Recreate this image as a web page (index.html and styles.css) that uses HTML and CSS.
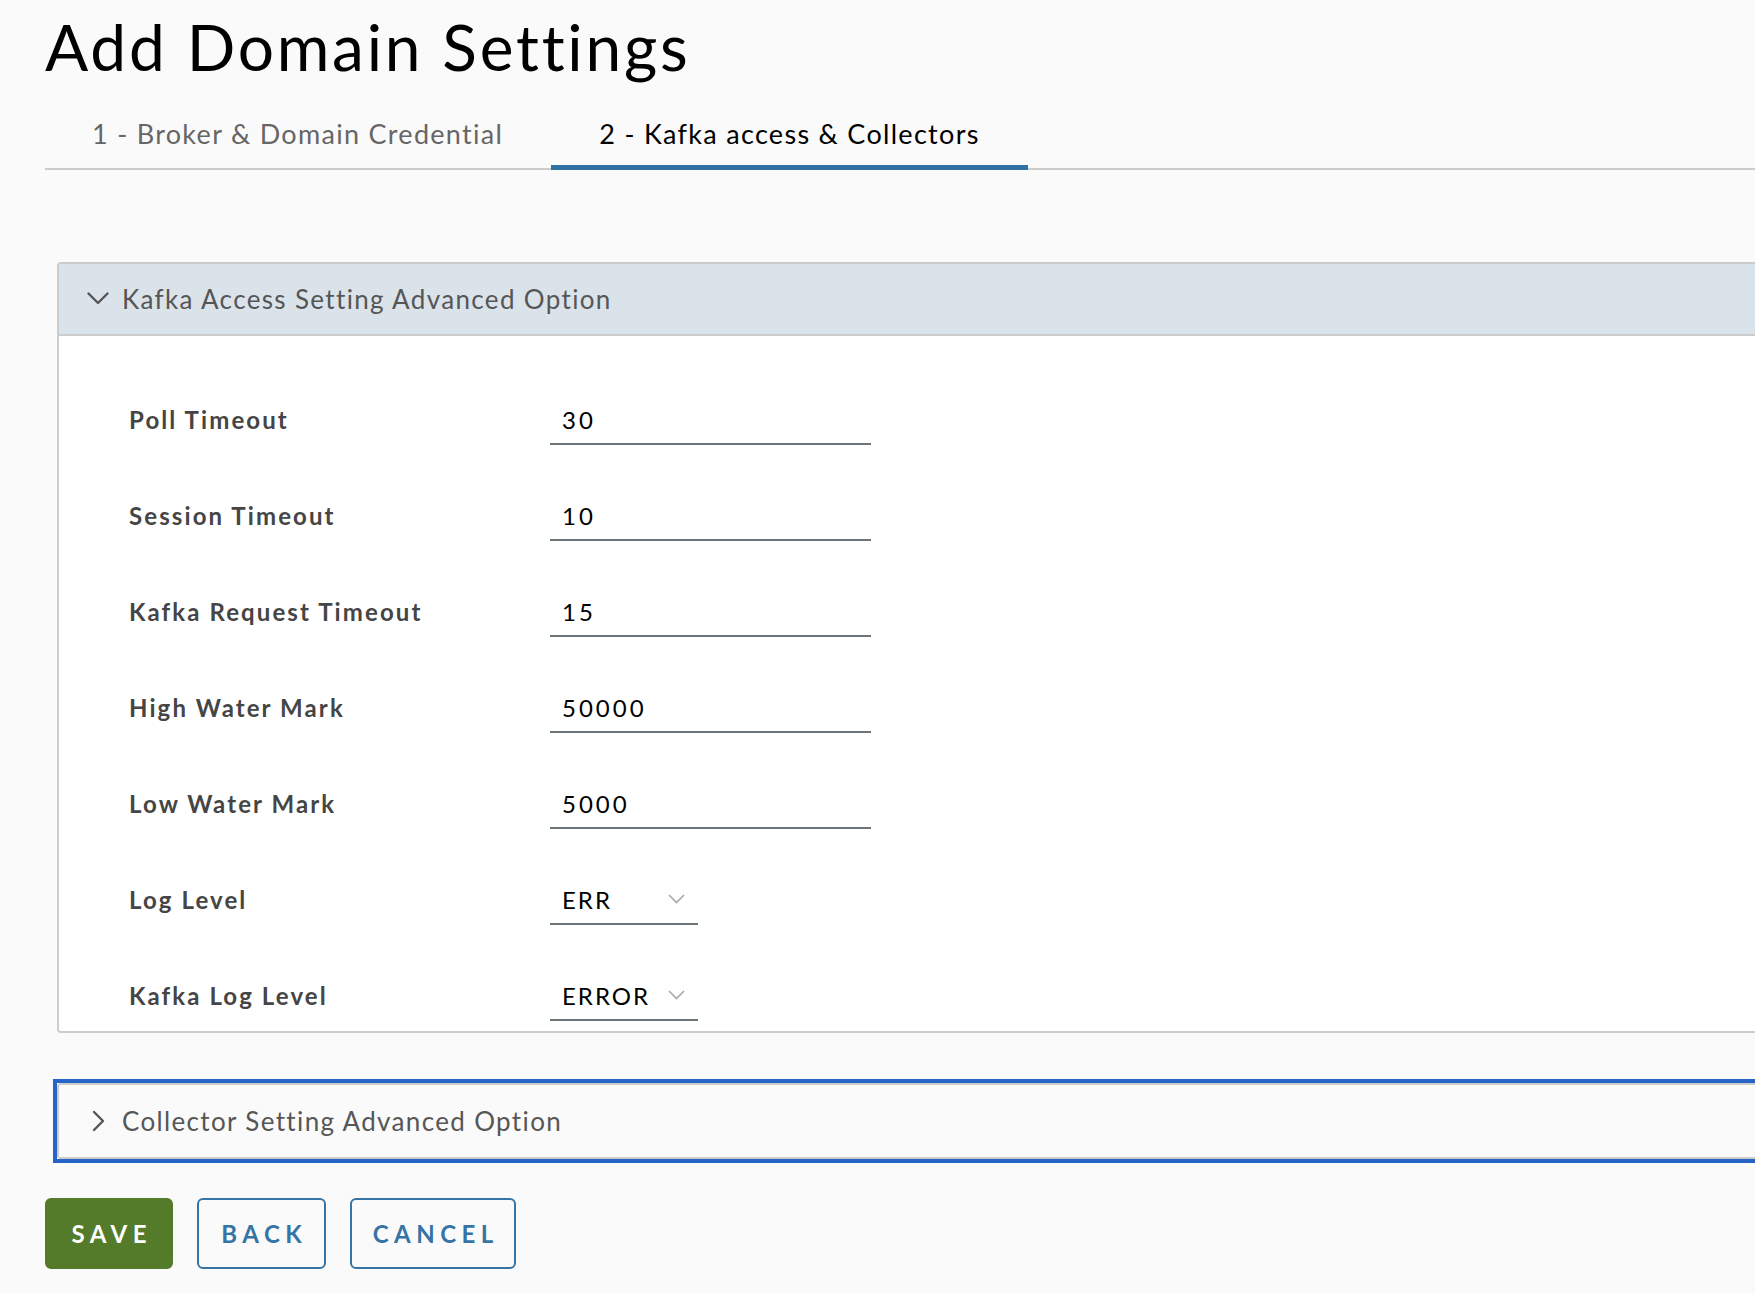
FILE: index.html
```html
<!DOCTYPE html>
<html lang="en">
<head>
<meta charset="utf-8">
<title>Add Domain Settings</title>
<link rel="stylesheet" href="styles.css">
</head>
<body>
<div class="page">
  <h1 class="title">Add Domain Settings</h1>
  <nav class="tabs">
    <div class="tab">1 - Broker &amp; Domain Credential</div>
    <div class="tab active">2 - Kafka access &amp; Collectors</div>
  </nav>

  <section class="panel">
    <div class="panel-head">
      <svg class="chev-down" width="22" height="13" viewBox="0 0 22 13"><path d="M1.5 1.5 L11 11 L20.5 1.5" fill="none" stroke="#555" stroke-width="2.4" stroke-linecap="round" stroke-linejoin="round"/></svg>
      <span>Kafka Access Setting Advanced Option</span>
    </div>
    <div class="panel-body">
      <div class="form">
        <label class="lbl">Poll Timeout</label>
        <input class="field" type="text" value="30">
        <label class="lbl">Session Timeout</label>
        <input class="field" type="text" value="10">
        <label class="lbl">Kafka Request Timeout</label>
        <input class="field" type="text" value="15">
        <label class="lbl">High Water Mark</label>
        <input class="field" type="text" value="50000">
        <label class="lbl">Low Water Mark</label>
        <input class="field" type="text" value="5000">
        <label class="lbl">Log Level</label>
        <div class="select"><span>ERR</span><svg class="sel-chev" width="17" height="10" viewBox="0 0 17 10"><path d="M1 1 L8.5 8.5 L16 1" fill="none" stroke="#a9a9a9" stroke-width="1.6"/></svg></div>
        <label class="lbl">Kafka Log Level</label>
        <div class="select"><span>ERROR</span><svg class="sel-chev" width="17" height="10" viewBox="0 0 17 10"><path d="M1 1 L8.5 8.5 L16 1" fill="none" stroke="#a9a9a9" stroke-width="1.6"/></svg></div>
      </div>
    </div>
  </section>

  <div class="focus-ring">
    <section class="panel closed">
      <div class="panel-head">
        <svg class="chev-right" width="13" height="22" viewBox="0 0 13 22"><path d="M2 2 L11 11 L2 20" fill="none" stroke="#555" stroke-width="2.4" stroke-linecap="round" stroke-linejoin="round"/></svg>
        <span>Collector Setting Advanced Option</span>
      </div>
    </section>
  </div>

  <div class="actions">
    <button class="btn btn-primary btn-save">SAVE</button>
    <button class="btn btn-outline btn-back">BACK</button>
    <button class="btn btn-outline btn-cancel">CANCEL</button>
  </div>
</div>
</body>
</html>
```

FILE: styles.css
```css
html, body {
  margin: 0;
  padding: 0;
  background: #fafafa;
  overflow: hidden;
  font-family: "Lato", "Open Sans", sans-serif;
}

.page {
  padding-left: 45px;
}

.title {
  margin: 9px 0 0 0;
  font-size: 64px;
  line-height: 1.2;
  font-weight: 400;
  color: #000;
  letter-spacing: 2.75px;
}

.tabs {
  margin-top: 14px;
  display: flex;
  align-items: flex-end;
  border-bottom: 2px solid #cccccc;
}

.tab {
  padding: 17px 48px 17px 47px;
  font-size: 27px;
  line-height: 34px;
  color: #666;
  letter-spacing: 1.3px;
  white-space: nowrap;
}

.tab.active {
  color: #000;
  padding: 17px 48px 14px 48px;
  border-bottom: 5px solid #3172a2;
  margin-bottom: -2px;
}

.panel {
  margin: 92px -40px 0 12px;
  border: 2px solid #cccccc;
  border-radius: 4px;
  background: #fff;
}

.panel-head {
  height: 70px;
  background: #dbe3ea;
  border-bottom: 2px solid #cccccc;
  border-radius: 2px 2px 0 0;
  display: flex;
  align-items: center;
  padding-left: 28px;
  gap: 13px;
  font-size: 26px;
  color: #565656;
  letter-spacing: 1.35px;
}

.panel-body {
  padding: 61px 0 10px 70px;
}

.form {
  display: grid;
  grid-template-columns: 421px auto;
  row-gap: 48px;
  align-items: start;
}

.lbl {
  font-weight: 700;
  font-size: 24px;
  line-height: 46px;
  color: #454545;
  letter-spacing: 2.1px;
}

.field {
  display: block;
  box-sizing: border-box;
  width: 321px;
  height: 48px;
  border: none;
  border-bottom: 2px solid #6b7479;
  background: transparent;
  padding: 0 12px;
  margin: 0;
  font-family: "Lato", "Open Sans", sans-serif;
  font-size: 24px;
  color: #000;
  outline: none;
  letter-spacing: 3px;
}

.select {
  box-sizing: border-box;
  width: 148px;
  height: 48px;
  border-bottom: 2px solid #6b7479;
  display: flex;
  align-items: center;
  padding-left: 12px;
  font-size: 24px;
  color: #000;
  letter-spacing: 2px;
}

.select span {
  flex: 1;
}

.sel-chev {
  margin-right: 13px;
  margin-top: -2px;
}

.focus-ring {
  margin: 46px -40px 0 8px;
  border: 4px solid #2864c7;
}

.focus-ring .panel {
  margin: 0;
  background: #fafafa;
}

.panel.closed .panel-head {
  height: 72px;
  background: #fafafa;
  border-bottom: none;
  padding-left: 33px;
  gap: 17px;
}

.actions {
  margin-top: 35px;
  display: flex;
  gap: 24px;
}

.btn {
  box-sizing: border-box;
  height: 71px;
  border-radius: 6px;
  font-family: "Lato", "Open Sans", sans-serif;
  font-weight: 700;
  font-size: 24px;
  letter-spacing: 5.5px;
  padding: 0 0 0 5.5px;
  text-align: center;
  cursor: pointer;
}

.btn-save { width: 128px; }
.btn-back { width: 129px; }
.btn-cancel { width: 166px; }

.btn-primary {
  background: #537b2a;
  border: 2px solid #537b2a;
  color: #fff;
}

.btn-outline {
  background: #fafafa;
  border: 2px solid #3574a5;
  color: #3574a5;
}
```
